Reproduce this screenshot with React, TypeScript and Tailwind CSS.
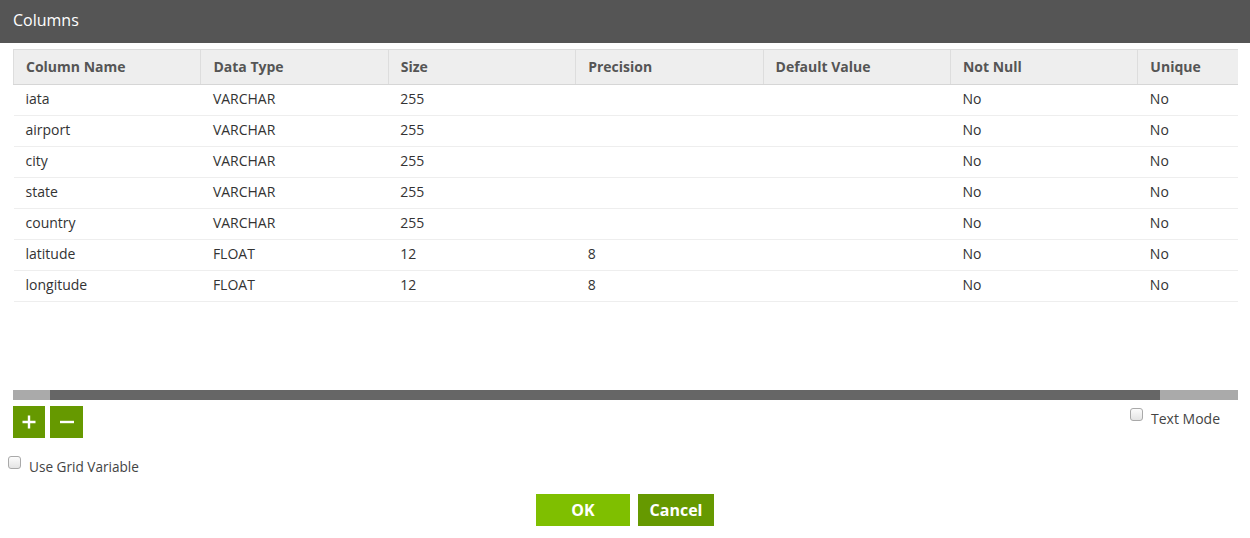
import React from "react";

const columns = ["Column Name", "Data Type", "Size", "Precision", "Default Value", "Not Null", "Unique"];

const rows = [
  ["iata", "VARCHAR", "255", "", "", "No", "No"],
  ["airport", "VARCHAR", "255", "", "", "No", "No"],
  ["city", "VARCHAR", "255", "", "", "No", "No"],
  ["state", "VARCHAR", "255", "", "", "No", "No"],
  ["country", "VARCHAR", "255", "", "", "No", "No"],
  ["latitude", "FLOAT", "12", "8", "", "No", "No"],
  ["longitude", "FLOAT", "12", "8", "", "No", "No"],
];

function Checkbox() {
  return (
    <span className="inline-block w-[13px] h-[13px] rounded-[3px] border border-[#a9a9a9] bg-gradient-to-b from-[#fcfcfc] to-[#e4e4e4]" />
  );
}

export default function App() {
  return (
    <div
      className="w-[1250px] h-[538px] bg-white overflow-hidden text-[14px] text-[#333]"
      style={{ fontFamily: '"Open Sans", "Noto Sans", sans-serif' }}
    >
      <div className="h-[43px] bg-[#555555] text-white text-[16px] pl-[13px] flex items-center pb-[3px]">
        Columns
      </div>

      <div className="px-[13px] pr-[12px] pt-[6px]">
        <div className="h-[341px] overflow-hidden">
          <table className="table-fixed border-collapse w-[1312px]">
            <colgroup>
              {columns.map((c) => (
                <col key={c} className="w-[187.4px]" />
              ))}
            </colgroup>
            <thead>
              <tr className="bg-[#eeeeee] h-[35px]">
                {columns.map((c) => (
                  <th
                    key={c}
                    className="text-left font-bold text-[#555] px-[12px] pb-[1px] border border-[#dddddd] border-b-[#d6d6d6]"
                  >
                    {c}
                  </th>
                ))}
              </tr>
            </thead>
            <tbody>
              {rows.map((r) => (
                <tr key={r[0]} className="h-[31px] border-b border-[#eeeeee]">
                  {r.map((v, i) => (
                    <td key={i} className="px-[12px] pb-[4px]">
                      {v}
                    </td>
                  ))}
                </tr>
              ))}
            </tbody>
          </table>
        </div>

        <div className="h-[10px] bg-[#aaaaaa] flex">
          <div className="w-[37px]" />
          <div className="w-[1110px] bg-[#666666]" />
        </div>

        <div className="flex items-start justify-between mt-[6px]">
          <div className="flex gap-[5px]">
            <button className="w-[32px] h-[32px] bg-[#669900] flex items-center justify-center">
              <svg width="16" height="16" viewBox="0 0 16 16">
                <path d="M8 1.5v13M1.5 8h13" stroke="white" strokeWidth="2.4" />
              </svg>
            </button>
            <button className="w-[33px] h-[32px] bg-[#669900] flex items-center justify-center">
              <svg width="16" height="16" viewBox="0 0 16 16">
                <path d="M1 8h14" stroke="white" strokeWidth="2.4" />
              </svg>
            </button>
          </div>
          <label className="flex items-center gap-[8px] mr-[18px] mt-[2px] text-[14px] text-[#444]">
            <span className="-mt-[6px]">
              <Checkbox />
            </span>
            Text Mode
          </label>
        </div>
      </div>

      <label className="flex items-center gap-[8px] pl-[8px] mt-[19px] text-[13.6px] text-[#444]">
        <span className="-mt-[6px]">
          <Checkbox />
        </span>
        Use Grid Variable
      </label>

      <div className="flex justify-center gap-[8px] mt-[17px]">
        <button className="w-[94px] h-[32px] bg-[#7fbf00] text-white font-bold text-[16px]">OK</button>
        <button className="w-[76px] h-[32px] bg-[#669900] text-white font-bold text-[16px]">Cancel</button>
      </div>
    </div>
  );
}
